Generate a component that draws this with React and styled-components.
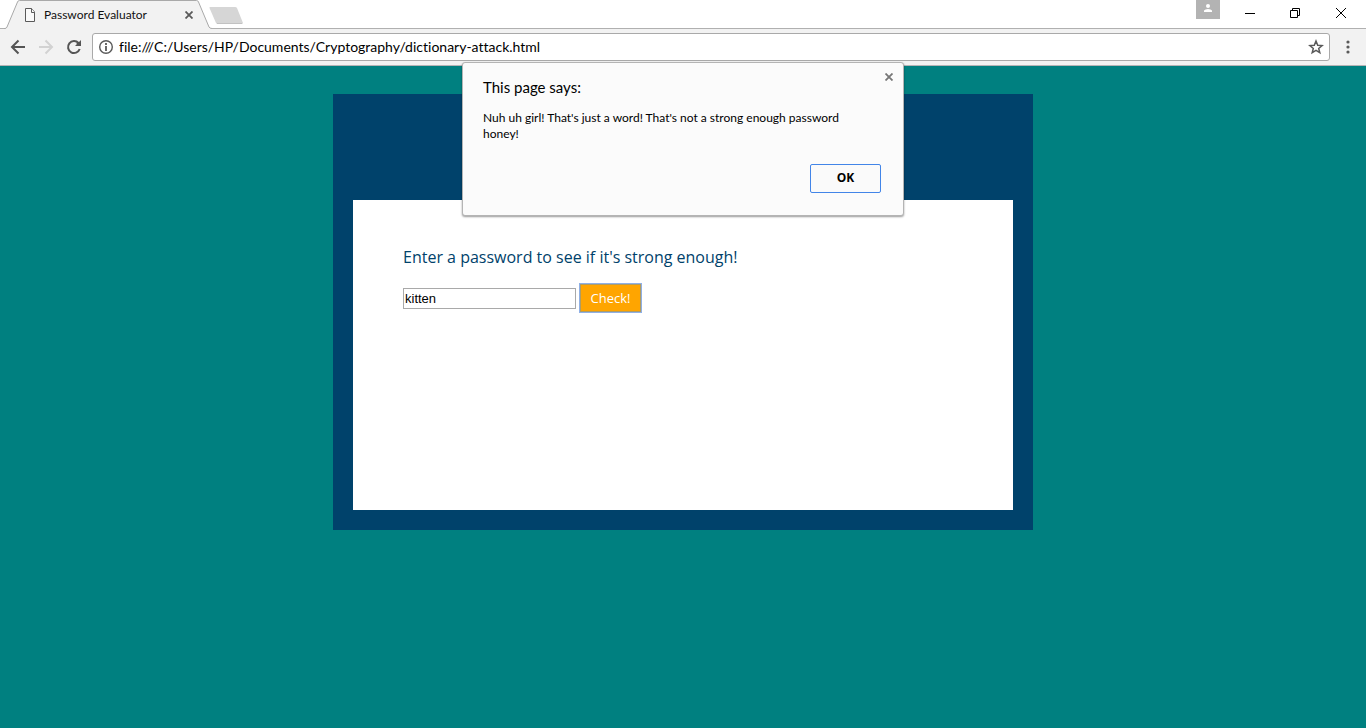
import React, { useState } from "react";
import styled, { createGlobalStyle } from "styled-components";

const GlobalStyle = createGlobalStyle`
  *, *::before, *::after { box-sizing: border-box; }
  html, body, #root { height: 100%; }
  body {
    margin: 0;
    font-family: "Open Sans", "Noto Sans", sans-serif;
    font-variant-ligatures: none;
  }
  svg { display: block; flex: none; }
`;

const uiFont = `Lato, "Noto Sans", sans-serif`;

const Browser = styled.div`
  display: flex;
  flex-direction: column;
  min-height: 100%;
`;

const TabStrip = styled.header`
  display: flex;
  height: 29px;
  padding-left: 4px;
  background: #fff;
  border-bottom: 1px solid #b0b0b0;
`;

const Tab = styled.div`
  position: relative;
  z-index: 0;
  display: flex;
  align-items: center;
  width: 208px;
  height: 29px;
  padding: 0 15px 0 20px;
  gap: 8px;
`;

const TabShape = styled.svg`
  position: absolute;
  inset: 0;
  z-index: -1;
`;

const TabTitle = styled.span`
  flex: 1;
  font-family: ${uiFont};
  font-size: 12px;
  line-height: 16px;
  white-space: nowrap;
  color: #111;
`;

const IconButton = styled.button`
  display: flex;
  align-items: center;
  justify-content: center;
  flex: none;
  width: ${(p) => p.$width || 16}px;
  height: ${(p) => p.$height || 16}px;
  padding: 0;
  border: 0;
  background: ${(p) => p.$fill || "none"};
`;

const WindowControls = styled.div`
  display: flex;
  margin-left: auto;
`;

const Toolbar = styled.nav`
  display: flex;
  align-items: center;
  height: 37px;
  padding: 0 6px 0 4px;
  background: #f2f2f2;
  border-bottom: 1px solid #b6b4b6;
`;

const AddressBar = styled.div`
  display: flex;
  align-items: center;
  flex: 1;
  height: 28px;
  margin: 0 6px 0 4px;
  padding: 0 5px;
  gap: 5px;
  background: #fff;
  border: 1px solid #a9a9a9;
  border-radius: 3px;
`;

const AddressInput = styled.input`
  flex: 1;
  min-width: 0;
  padding: 0;
  border: 0;
  outline: 0;
  background: none;
  font-family: ${uiFont};
  font-size: 14px;
  font-variant-ligatures: none;
  line-height: 20px;
  color: #000;
`;

const Viewport = styled.main`
  flex: 1;
  padding: 28px 16px;
  background: #008080;
`;

const Card = styled.section`
  max-width: 700px;
  margin: 0 auto;
  padding: 106px 20px 20px;
  background: #00426b;
`;

const Form = styled.form`
  min-height: 310px;
  padding: 46px 50px;
  background: #fff;
`;

const Prompt = styled.label`
  display: block;
  margin-bottom: 16px;
  font-size: 16px;
  line-height: 22px;
  color: #00426b;
`;

const FieldRow = styled.div`
  display: flex;
  align-items: center;
  gap: 4px;
`;

const PasswordField = styled.input`
  width: 173px;
  height: 21px;
  padding: 1px;
  border: 1px solid #a9a9a9;
  border-radius: 0;
  font-family: "Liberation Sans", sans-serif;
  font-size: 13px;
  color: #000;
`;

const CheckButton = styled.button`
  width: 61px;
  height: 28px;
  padding: 0;
  border: 1px solid #b09c62;
  background: #ffa500;
  box-shadow: 0 0 0 1px #8fb0e6;
  font-family: "Open Sans", sans-serif;
  font-size: 13px;
  color: #fff;
`;

const Dialog = styled.div`
  position: absolute;
  top: 62px;
  left: 50%;
  width: 442px;
  max-width: 100%;
  padding: 15px 22px 22px 20px;
  transform: translateX(-50%);
  background: #fbfbfb;
  border: 1px solid #b4b4b4;
  border-radius: 3px;
  box-shadow: 0 1px 2px rgba(0, 0, 0, 0.4);
  color: #000;
`;

const DialogTitle = styled.h2`
  margin: 0 0 14px;
  font-family: ${uiFont};
  font-size: 15px;
  font-weight: 400;
  line-height: 18px;
`;

const DialogText = styled.p`
  max-width: 380px;
  margin: 0 0 22px;
  font-family: ${uiFont};
  font-size: 12px;
  line-height: 16px;
`;

const DialogActions = styled.div`
  display: flex;
  justify-content: flex-end;
`;

const OkButton = styled.button`
  width: 71px;
  height: 29px;
  padding: 0 0 2px;
  border: 1px solid #4285e8;
  border-radius: 2px;
  background: #fafafa;
  font-family: "Open Sans", sans-serif;
  font-size: 12px;
  font-weight: 700;
  color: #000;
`;

const DialogClose = styled.div`
  position: absolute;
  top: 6px;
  right: 6px;
`;

const Cross = ({ color }) => (
  <svg width="8" height="8" viewBox="0 0 8 8" fill="none" stroke={color} strokeWidth="1.800">
    <path d="M.5 .5l7 7M7.5 .5l-7 7" />
  </svg>
);

export default function App() {
  const [open, setOpen] = useState(true);
  return (
    <>
      <GlobalStyle />
      <Browser>
        <TabStrip>
          <Tab>
            <TabShape width="208" height="29" viewBox="0 0 208 29">
              <path d="M0 29L1 28.5Q2.500 28.300 3 27L13.500 2Q14 .5 15.500 .5H192.500Q194 .5 194.500 2L205 27Q205.500 28.300 208 28.500V29Z" fill="#f2f2f2" />
              <path d="M0 28.500H1Q2.500 28.300 3 27L13.500 2Q14 .5 15.500 .5H192.500Q194 .5 194.500 2L205 27Q205.500 28.300 208 28.500" fill="none" stroke="#a9a9a9" />
            </TabShape>
            <svg width="12" height="14" viewBox="0 0 12 14" fill="#fafafa" stroke="#5a5a5a">
              <path d="M1.500 .5H7.500L10.500 4V13.500H1.500Z" />
              <path d="M7.500 .5V4.500H10.500" />
            </svg>
            <TabTitle>Password Evaluator</TabTitle>
            <IconButton aria-label="Close tab">
              <Cross color="#5a5a5a" />
            </IconButton>
          </Tab>
          <IconButton aria-label="New tab" $width={32} $height={29}>
            <svg width="38" height="18" viewBox="0 0 38 18">
              <path d="M.5 2Q0 1 1.500 1H26Q27.500 1 28 2L34 17Q34 18 32.500 18H9Q7.500 18 7 17Z" fill="#d6d6d6" />
              <path d="M8 17.500H33" stroke="#c2c2c2" />
            </svg>
          </IconButton>
          <WindowControls>
            <IconButton aria-label="Profile" $width={24} $height={19} $fill="#b3b3b3">
              <svg width="24" height="19" viewBox="0 0 24 19" fill="#fff">
                <circle cx="12" cy="6" r="2" />
                <path d="M8 12V10.500Q9 9 12 9T16 10.500V12Z" />
              </svg>
            </IconButton>
            <IconButton aria-label="Minimize" $width={54} $height={26}>
              <svg width="54" height="26" viewBox="0 0 54 26" stroke="#000">
                <path d="M25 13.500H35" />
              </svg>
            </IconButton>
            <IconButton aria-label="Restore" $width={46} $height={26}>
              <svg width="46" height="26" viewBox="0 0 46 26" fill="none" stroke="#000">
                <path d="M16.500 10.500H23.500V17.500H16.500ZM18.500 10V8.500H25.500V15.500H24" />
              </svg>
            </IconButton>
            <IconButton aria-label="Close window" $width={46} $height={26}>
              <svg width="46" height="26" viewBox="0 0 46 26" stroke="#000">
                <path d="M16 8L26 18M26 8L16 18" />
              </svg>
            </IconButton>
          </WindowControls>
        </TabStrip>

        <Toolbar>
          <IconButton aria-label="Back" $width={28} $height={28}>
            <svg width="16" height="16" viewBox="0 0 16 16" fill="none" stroke="#555" strokeWidth="2">
              <path d="M15 8H2M8.500 1.500L2 8L8.500 14.500" />
            </svg>
          </IconButton>
          <IconButton aria-label="Forward" $width={28} $height={28} disabled>
            <svg width="16" height="16" viewBox="0 0 16 16" fill="none" stroke="#d2d2d2" strokeWidth="2">
              <path d="M1 8H14M7.500 1.500L14 8L7.500 14.500" />
            </svg>
          </IconButton>
          <IconButton aria-label="Reload" $width={28} $height={28}>
            <svg width="16" height="16" viewBox="0 0 16 16">
              <path d="M13.700 10A6 6 0 1 1 12.500 4L11 5.500" fill="none" stroke="#555" strokeWidth="2" />
              <path d="M15 1V7H9Z" fill="#555" />
            </svg>
          </IconButton>
          <AddressBar>
            <svg width="16" height="16" viewBox="0 0 16 16" fill="none" stroke="#5a5a5a">
              <circle cx="8" cy="8" r="6.300" strokeWidth="1.400" />
              <path d="M8 7V12M8 4V6" strokeWidth="1.800" />
            </svg>
            <AddressInput
              aria-label="Address"
              defaultValue="file:///C:/Users/HP/Documents/Cryptography/dictionary-attack.html"
            />
            <IconButton aria-label="Bookmark this page">
              <svg width="16" height="16" viewBox="0 0 16 16" fill="none" stroke="#5a5a5a" strokeWidth="1.500">
                <path d="M8 2L9.700 6.200L14.100 6.500L10.700 9.400L11.800 13.700L8 11.400L4.200 13.700L5.300 9.400L1.900 6.500L6.300 6.200Z" />
              </svg>
            </IconButton>
          </AddressBar>
          <IconButton aria-label="Menu" $width={24} $height={28}>
            <svg width="4" height="14" viewBox="0 0 4 14" fill="#5a5a5a">
              <circle cx="2" cy="2" r="1.600" />
              <circle cx="2" cy="7" r="1.600" />
              <circle cx="2" cy="12" r="1.600" />
            </svg>
          </IconButton>
        </Toolbar>

        <Viewport>
          <Card>
            <Form
              onSubmit={(e) => {
                e.preventDefault();
                setOpen(true);
              }}
            >
              <Prompt htmlFor="password">Enter a password to see if it's strong enough!</Prompt>
              <FieldRow>
                <PasswordField id="password" type="text" defaultValue="kitten" />
                <CheckButton type="submit">Check!</CheckButton>
              </FieldRow>
            </Form>
          </Card>
        </Viewport>

        {open && (
          <Dialog role="alertdialog" aria-labelledby="dialog-title" aria-describedby="dialog-text">
            <DialogTitle id="dialog-title">This page says:</DialogTitle>
            <DialogText id="dialog-text">
              Nuh uh girl! That's just a word! That's not a strong enough password honey!
            </DialogText>
            <DialogActions>
              <OkButton type="button" onClick={() => setOpen(false)}>OK</OkButton>
            </DialogActions>
            <DialogClose>
              <IconButton aria-label="Close dialog" onClick={() => setOpen(false)}>
                <Cross color="#777" />
              </IconButton>
            </DialogClose>
          </Dialog>
        )}
      </Browser>
    </>
  );
}
